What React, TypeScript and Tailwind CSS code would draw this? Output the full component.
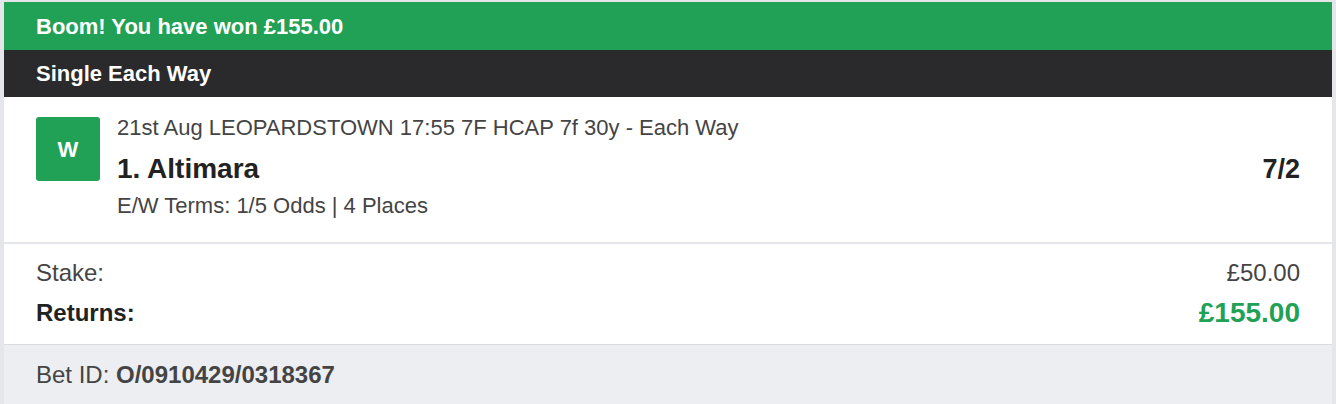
const BetReceipt = () => {
    return (
        <div className="min-h-[404px] bg-[#e4e6e9] px-1 pt-[2px] font-['Liberation_Sans',Arial,sans-serif]">
            <div className="flex min-h-[402px] flex-col bg-[#edeef1]">
                <div className="flex h-12 items-center bg-[#21a156] px-8">
                    <h2 className="text-[22px] font-bold text-white">Boom! You have won £155.00</h2>
                </div>
                <div className="flex h-[47px] items-center bg-[#2a2a2c] px-8">
                    <h3 className="text-[22px] font-bold text-white">Single Each Way</h3>
                </div>

                <div className="flex items-start border-b-2 border-[#e4e6e9] bg-white pt-[18px] pb-[23px] pl-8 pr-8">
                    <div className="mt-[2px] flex h-16 w-16 shrink-0 items-center justify-center rounded-[3px] bg-[#21a156]">
                        <span className="text-[22px] font-bold text-white">W</span>
                    </div>
                    <div className="ml-[17px] flex flex-1 flex-col">
                        <p className="text-[22px] leading-[26px] text-[#444]">
                            21st Aug LEOPARDSTOWN 17:55 7F HCAP 7f 30y - Each Way
                        </p>
                        <div className="mt-3 flex items-center justify-between">
                            <p className="text-[28px] font-bold leading-[32px] text-[#222]">1. Altimara</p>
                            <p className="text-[27px] font-bold leading-[32px] text-[#222]">7/2</p>
                        </div>
                        <p className="mt-2 text-[22px] leading-[26px] text-[#444]">E/W Terms: 1/5 Odds | 4 Places</p>
                    </div>
                </div>

                <div className="flex flex-col border-b border-[#d9dadd] bg-white px-8 pt-[15px] pb-[15px]">
                    <div className="flex items-center justify-between text-[24px] leading-[28px] text-[#444]">
                        <span>Stake:</span>
                        <span>£50.00</span>
                    </div>
                    <div className="mt-[10px] flex items-center justify-between">
                        <span className="text-[24px] font-bold leading-[28px] text-[#222]">Returns:</span>
                        <span className="text-[28px] font-bold leading-[32px] text-[#21a156]">£155.00</span>
                    </div>
                </div>

                <div className="px-8 pt-4 text-[24px] leading-[28px] text-[#444]">
                    Bet ID: <span className="font-bold">O/0910429/0318367</span>
                </div>
            </div>
        </div>
    );
}

export default function App() {
    return <BetReceipt />;
}
